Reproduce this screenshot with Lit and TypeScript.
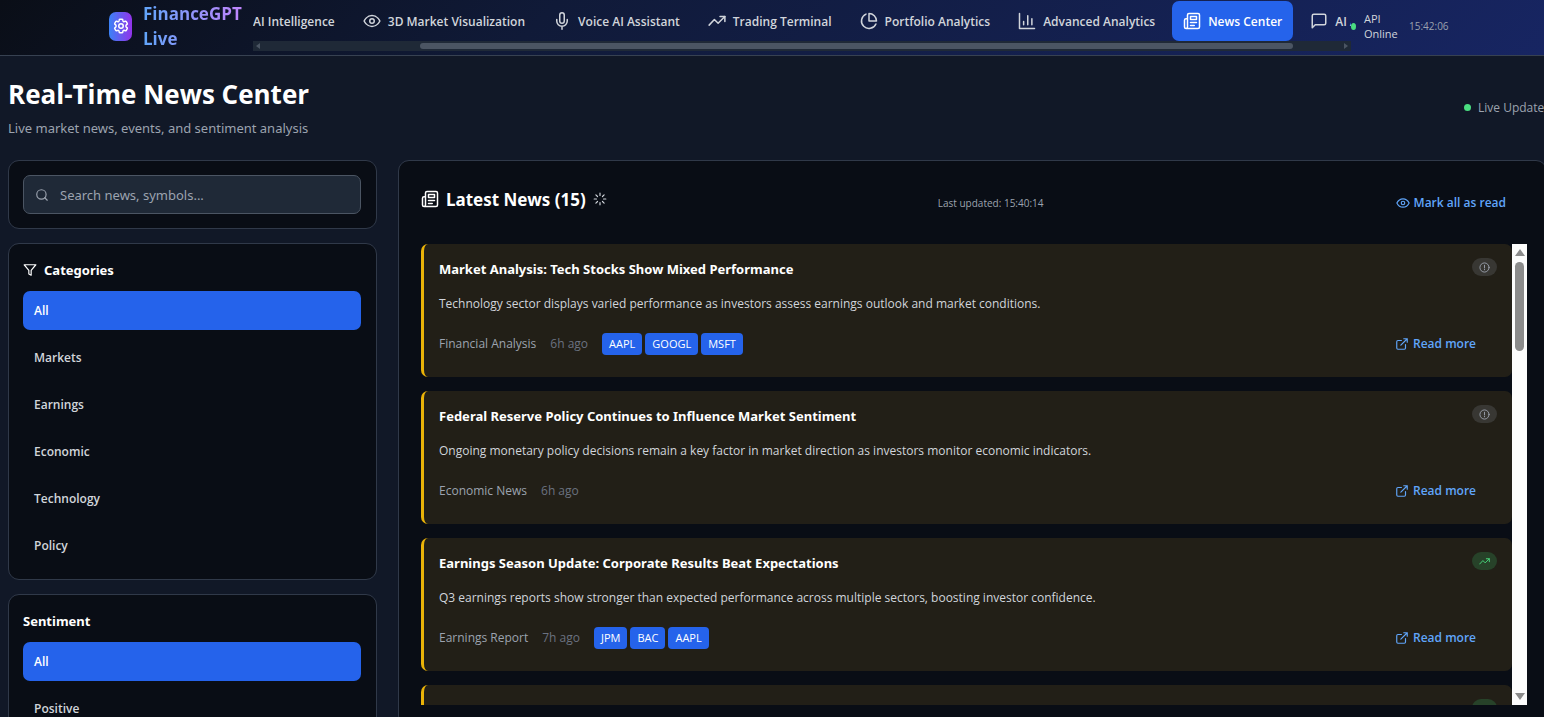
import { LitElement, html, css, svg } from "lit";
import { customElement, property, state } from "lit/decorators.js";

type IconName =
  | "gear" | "eye" | "mic" | "trend" | "pie" | "chart" | "news" | "chat"
  | "search" | "filter" | "loader" | "info" | "external";

const shapes: Record<IconName, unknown> = {
  gear: svg`<path d="M9.6 3.9c.1-.5.6-.9 1.1-.9h2.600c.5 0 1 .4 1.100.9l.2 1.300c.1.4.3.700.7.900.3.200.8.200 1.100.100l1.200-.5c.5-.2 1.100 0 1.400.5l1.300 2.200c.3.5.2 1.100-.3 1.400l-1 .8c-.3.300-.4.700-.4 1.100v.6c0 .4.100.8.400 1.100l1 .8c.4.400.5 1 .3 1.400l-1.300 2.200c-.3.5-.9.700-1.400.5l-1.200-.5c-.4-.1-.8-.1-1.100.100-.4.200-.6.500-.7.900l-.2 1.300c-.1.5-.6.900-1.100.900h-2.600c-.5 0-1-.4-1.100-.9l-.2-1.300c-.1-.4-.3-.7-.7-.9-.3-.2-.8-.2-1.100-.1l-1.200.5c-.5.2-1.100 0-1.400-.5l-1.300-2.200c-.3-.5-.2-1.100.3-1.400l1-.8c.3-.3.4-.7.4-1.100v-.6c0-.4-.1-.8-.4-1.100l-1-.8c-.4-.4-.5-1-.3-1.400l1.300-2.200c.3-.5.9-.7 1.400-.5l1.200.5c.4.100.8.100 1.100-.1.400-.2.600-.5.700-.9z"/><circle cx="12" cy="12" r="3"/>`,
  eye: svg`<path d="M1.500 12S5 4.800 12 4.800 22.500 12 22.500 12 19 19.200 12 19.200 1.500 12 1.500 12z"/><circle cx="12" cy="12" r="3"/>`,
  mic: svg`<path d="M12 1a3 3 0 0 0-3 3v8a3 3 0 0 0 6 0V4a3 3 0 0 0-3-3z"/><path d="M19 10v2a7 7 0 0 1-14 0v-2M12 19v4"/>`,
  trend: svg`<path d="M22.500 6 13.500 15l-5-5L1.500 17.500"/><path d="M16 6h6.500v6.500"/>`,
  pie: svg`<path d="M21.200 15.900A10 10 0 1 1 8 2.830"/><path d="M22 12A10 10 0 0 0 12 2v10z"/>`,
  chart: svg`<path d="M2 2v20h20M7.500 17v-4.500M13 17V5M18.500 17V9"/>`,
  news: svg`<path d="M4 22h16a2 2 0 0 0 2-2V4a2 2 0 0 0-2-2H8a2 2 0 0 0-2 2v16a2 2 0 0 1-2 2zm0 0a2 2 0 0 1-2-2v-9a2 2 0 0 1 2-2h2"/><path d="M10 6h8v4h-8zM10 14h8M10 18h5"/>`,
  chat: svg`<path d="M21 15a2 2 0 0 1-2 2H7l-4 4V5a2 2 0 0 1 2-2h14a2 2 0 0 1 2 2z"/>`,
  search: svg`<circle cx="11" cy="11" r="8"/><path d="m21 21-4.300-4.300"/>`,
  filter: svg`<path d="M22 3H2l8 9.460V19l4 2v-8.540z"/>`,
  loader: svg`<path d="M12 2v4M12 18v4M4.930 4.930l2.830 2.830M16.240 16.240l2.830 2.830M2 12h4M18 12h4M4.930 19.070l2.830-2.830M16.240 7.760l2.830-2.830"/>`,
  info: svg`<circle cx="12" cy="12" r="10"/><path d="M12 7v6M12 16v1"/>`,
  external: svg`<path d="M18 13v6a2 2 0 0 1-2 2H5a2 2 0 0 1-2-2V8a2 2 0 0 1 2-2h6M15 3h6v6M10 14 21 3"/>`,
};

const icon = (name: IconName, size: number) => html`<svg class="icon" width=${size} height=${size}
  viewBox="0 0 24 24" fill="none" stroke="currentColor" stroke-width="2" stroke-linecap="round"
  stroke-linejoin="round" aria-hidden="true">${shapes[name]}</svg>`;

const shared = css`
  * { box-sizing: border-box; margin: 0; }
  button, input { font: inherit; color: inherit; border: 0; background: none; padding: 0; }
  button { cursor: pointer; }
  a { color: inherit; text-decoration: none; }
  .icon { display: block; flex: none; }
  h2, h3, .sub, .search { font-family: "Noto Sans", "Open Sans", sans-serif; }
`;

interface Article {
  title: string;
  summary: string;
  source: string;
  age: string;
  symbols: string[];
  mood: "neutral" | "positive";
}

const articles: Article[] = [
  {
    title: "Market Analysis: Tech Stocks Show Mixed Performance",
    summary: "Technology sector displays varied performance as investors assess earnings outlook and market conditions.",
    source: "Financial Analysis", age: "6h ago", symbols: ["AAPL", "GOOGL", "MSFT"], mood: "neutral",
  },
  {
    title: "Federal Reserve Policy Continues to Influence Market Sentiment",
    summary: "Ongoing monetary policy decisions remain a key factor in market direction as investors monitor economic indicators.",
    source: "Economic News", age: "6h ago", symbols: [], mood: "neutral",
  },
  {
    title: "Earnings Season Update: Corporate Results Beat Expectations",
    summary: "Q3 earnings reports show stronger than expected performance across multiple sectors, boosting investor confidence.",
    source: "Earnings Report", age: "7h ago", symbols: ["JPM", "BAC", "AAPL"], mood: "positive",
  },
  { title: "", summary: "", source: "", age: "", symbols: [], mood: "positive" },
];

@customElement("news-article")
export class NewsArticle extends LitElement {
  @property({ attribute: false }) article!: Article;

  static styles = [shared, css`
    :host { display: block; flex: none; }
    .card { min-height: 133px; padding: 14px 15px; border-left: 3px solid #eab308; border-radius: 7px; background: #221f17; }
    .top { display: flex; justify-content: space-between; align-items: flex-start; }
    h3 { font-size: 13px; line-height: 22px; font-weight: 700; color: #fff; }
    .mood { display: grid; place-items: center; width: 25px; height: 18px; margin-left: auto; border-radius: 9px; }
    .neutral { background: #383733; color: #9ca3af; }
    .positive { background: #274229; color: #4ade80; }
    .summary { margin-top: 13px; font-size: 12px; line-height: 22px; color: #d1d5db; }
    .meta { display: flex; align-items: center; margin-top: 9px; height: 39px; font-size: 12px; color: #9ca3af; gap: 14px; }
    .age { color: #6b7280; }
    .tags { display: flex; gap: 3px; list-style: none; padding: 0; }
    .tag { padding: 0 7px; border-radius: 4px; background: #2563eb; color: #fff; font-size: 11px; line-height: 22px; }
    .more { display: flex; align-items: center; gap: 4px; margin-left: auto; padding: 10px 21px; color: #60a5fa; font-weight: 600; }
  `];

  render() {
    const a = this.article;
    return html`<article class="card">
      <div class="top">
        ${a.title ? html`<h3>${a.title}</h3>` : null}
        <span class="mood ${a.mood}">${icon(a.mood === "neutral" ? "info" : "trend", 11)}</span>
      </div>
      <p class="summary">${a.summary}</p>
      <div class="meta">
        <span>${a.source}</span><span class="age">${a.age}</span>
        ${a.symbols.length ? html`<ul class="tags">${a.symbols.map((s) => html`<li class="tag">${s}</li>`)}</ul>` : null}
        ${a.title ? html`<a class="more" href="#">${icon("external", 14)}Read more</a>` : null}
      </div>
    </article>`;
  }
}

@customElement("app-root")
export class AppRoot extends LitElement {
  @state() private category = "All";
  @state() private mood = "All";

  private tabs: [IconName, string][] = [
    ["eye", "3D Market Visualization"], ["mic", "Voice AI Assistant"], ["trend", "Trading Terminal"],
    ["pie", "Portfolio Analytics"], ["chart", "Advanced Analytics"], ["news", "News Center"], ["chat", "AI Assistant"],
  ];

  static styles = [shared, css`
    :host { display: block; height: 100vh; overflow: hidden; background: #111827; color: #fff;
      font-family: "Segoe UI", "Open Sans", "Noto Sans", sans-serif; font-size: 13px; }
    .bar { display: flex; align-items: center; padding: 1px 96px 4px 109px; border-bottom: 1px solid #374151;
      background: linear-gradient(135deg, #0a0e17 0%, #101a38 35%, #172562 100%); }
    .logo { display: grid; place-items: center; flex: none; width: 23px; height: 29px; border-radius: 7px;
      background: linear-gradient(to right, #3b82f6, #9333ea); }
    .brand { flex: none; width: 99px; margin: 0 11px; font-size: 17px; line-height: 25px; font-weight: 700;
      background: linear-gradient(to right, #60a5fa, #c084fc); -webkit-background-clip: text; background-clip: text; color: transparent; }
    .nav { flex: 1; min-width: 0; }
    .tabs { display: flex; gap: 6px; overflow: hidden; }
    .tab { display: flex; align-items: center; flex: none; gap: 7px; height: 40px; padding: 0 11px; border-radius: 7px;
      font-size: 12px; font-weight: 600; color: #d1d5db; white-space: nowrap; }
    .tab.first { padding-left: 0; }
    .tab.on { background: #2563eb; color: #fff; }
    .track { display: flex; align-items: center; justify-content: space-between; height: 10px; padding: 0 3px; background: #1f2937; }
    .thumb { flex: none; width: 80%; height: 6px; margin-left: 10%; border-radius: 3px; background: #4b5563; }
    .arrow { width: 0; height: 0; border: 3px solid transparent; }
    .arrow.left { border-left: 0; border-right: 4px solid #4b5563; }
    .arrow.right { border-right: 0; border-left: 4px solid #4b5563; }
    .status { display: flex; align-items: center; flex: none; font-size: 11px; line-height: 15px; color: #d1d5db; }
    .dot { flex: none; width: 7px; height: 7px; border-radius: 50%; background: #4ade80; }
    .dot.slim { width: 5px; margin-right: 8px; }
    .api { width: 45px; }
    .time { width: 39px; font-size: 10px; color: #9ca3af; }

    .page { margin: 0 -3px 0 8px; padding-top: 20px; }
    .head { display: flex; align-items: center; justify-content: space-between; margin-right: -3px; padding-bottom: 21px; }
    h1 { font-size: 26px; line-height: 36px; font-weight: 700; }
    .sub { margin-top: 6px; font-size: 13px; line-height: 21px; color: #9ca3af; }
    .live { display: flex; align-items: center; gap: 7px; font-size: 12px; color: #9ca3af; }
    .grid { display: grid; grid-template-columns: repeat(4, minmax(0, 1fr)); gap: 21px; align-items: start; }
    .side { display: grid; gap: 14px; }
    .panel { border: 1px solid #303949; border-radius: 11px; background: #090d15; padding: 14px 15px 14px 14px; }
    .search { display: flex; align-items: center; gap: 11px; height: 39px; padding: 0 11px; border: 1px solid #4b5563;
      border-radius: 7px; background: #1f2937; color: #9ca3af; }
    .search input { flex: 1; min-width: 0; outline: 0; }
    .search input::placeholder { color: #9ca3af; opacity: 1; }
    h2 { display: flex; align-items: center; gap: 7px; height: 24px; margin-bottom: 9px; font-size: 13px; font-weight: 700; }
    .options { display: grid; gap: 8px; }
    .option { height: 39px; padding: 0 11px; border-radius: 7px; text-align: left; font-size: 12px; font-weight: 600; color: #d1d5db; }
    .option.on { background: #2563eb; color: #fff; }

    .news { grid-column: span 3; padding: 22px 19px 21px 22px; }
    .newshead { display: flex; align-items: center; justify-content: space-between; margin-bottom: 22px; }
    .newshead h2 { height: 32px; margin-bottom: 7px; font-size: 17px; }
    .updated { font-size: 10px; color: #9ca3af; }
    .mark { display: flex; align-items: center; gap: 4px; height: 39px; padding: 0 21px; font-size: 12px; font-weight: 600; color: #60a5fa; }
    .spin { color: #d1d5db; }
    .feed { display: flex; height: calc(100vh - 256px); }
    .list { display: flex; flex: 1; flex-direction: column; gap: 14px; min-width: 0; overflow: hidden; }
    .vtrack { display: flex; flex: none; flex-direction: column; align-items: center; width: 15px; padding: 5px 0; background: #fcfcfc; }
    .vthumb { width: 9px; height: 89px; margin: 6px 0 auto; border-radius: 5px; background: #8b8b8b; }
    .varrow { width: 0; height: 0; border: 5px solid transparent; }
    .varrow.up { border-top: 0; border-bottom: 7px solid #8b8b8b; }
    .varrow.down { border-bottom: 0; border-top: 7px solid #8b8b8b; }
  `];

  private options(items: string[], current: string, pick: (v: string) => void) {
    return html`<div class="options">${items.map((i) => html`
      <button class="option ${i === current ? "on" : ""}" @click=${() => pick(i)}>${i}</button>`)}</div>`;
  }

  render() {
    return html`
      <header class="bar">
        <div class="logo">${icon("gear", 18)}</div>
        <div class="brand">FinanceGPT Live</div>
        <nav class="nav">
          <div class="tabs">
            <button class="tab first">AI Intelligence</button>
            ${this.tabs.map(([i, t]) => html`<button class="tab ${t === "News Center" ? "on" : ""}">${icon(i, 18)}${t}</button>`)}
          </div>
          <div class="track"><i class="arrow left"></i><i class="thumb"></i><i class="arrow right"></i></div>
        </nav>
        <div class="status"><i class="dot slim"></i><span class="api">API Online</span><span class="time">15:42:06</span></div>
      </header>
      <main class="page">
        <div class="head">
          <div><h1>Real-Time News Center</h1><p class="sub">Live market news, events, and sentiment analysis</p></div>
          <div class="live"><i class="dot"></i>Live Updates</div>
        </div>
        <div class="grid">
          <aside class="side">
            <div class="panel"><label class="search">${icon("search", 14)}<input type="text" aria-label="Search news" placeholder="Search news, symbols..." /></label></div>
            <section class="panel"><h2>${icon("filter", 14)}Categories</h2>
              ${this.options(["All", "Markets", "Earnings", "Economic", "Technology", "Policy"], this.category, (v) => (this.category = v))}
            </section>
            <section class="panel"><h2>Sentiment</h2>
              ${this.options(["All", "Positive"], this.mood, (v) => (this.mood = v))}
            </section>
          </aside>
          <section class="panel news">
            <div class="newshead">
              <h2>${icon("news", 18)}Latest News (15)<span class="spin">${icon("loader", 14)}</span></h2>
              <span class="updated">Last updated: 15:40:14</span>
              <button class="mark">${icon("eye", 14)}Mark all as read</button>
            </div>
            <div class="feed">
              <div class="list">${articles.map((a) => html`<news-article .article=${a}></news-article>`)}</div>
              <div class="vtrack" aria-hidden="true"><i class="varrow up"></i><i class="vthumb"></i><i class="varrow down"></i></div>
            </div>
          </section>
        </div>
      </main>`;
  }
}
